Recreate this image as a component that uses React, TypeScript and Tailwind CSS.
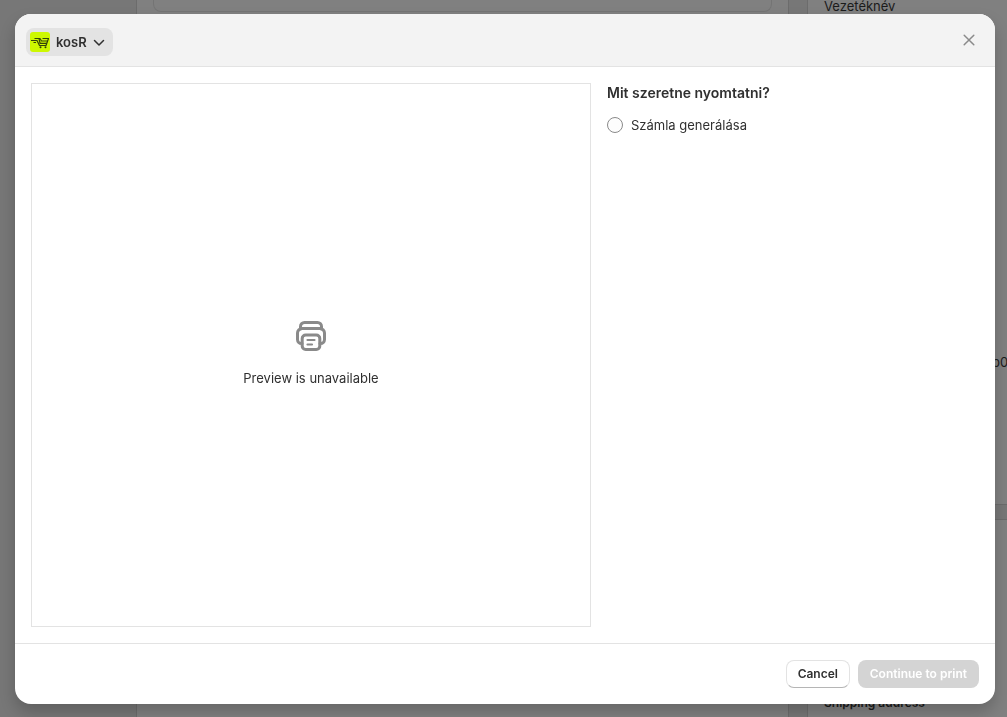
import React, { useState } from "react";

const AppLogo: React.FC = () => (
  <svg className="h-5 w-5" viewBox="0 0 20 20" fill="none" aria-hidden="true">
    <rect width="20" height="20" rx="3" fill="#cdf800" />
    <g stroke="#33420a" strokeWidth="1.2" strokeLinejoin="round">
      <path d="M1 8.500h6l2.500 5h6.500l2.500-7H12.500" />
      <path d="M4.500 6.500h5.500l1.500 2.500h6" />
      <path d="M3.500 10.500h2.500" />
      <path d="M9.500 11.300h7.500" />
      <path d="M9 6.500l1 4.500" />
    </g>
    <circle cx="10.500" cy="15.200" r="1" fill="#33420a" />
    <circle cx="15.500" cy="15.200" r="1" fill="#33420a" />
  </svg>
);

const PrinterIcon: React.FC = () => (
  <svg className="h-8 w-8" viewBox="0 0 32 32" fill="none" stroke="#8a8a8a" strokeWidth="3" strokeLinecap="round" strokeLinejoin="round" aria-hidden="true">
    <path d="M5.500 9V6.500a4 4 0 0 1 4-4h13a4 4 0 0 1 4 4V9" />
    <path d="M7 23.500h-.5a4 4 0 0 1-4-4V13a4.500 4.500 0 0 1 4.500-4.500h18a4.500 4.500 0 0 1 4.500 4.500v6.500a4 4 0 0 1-4 4H25" />
    <rect x="7.200" y="15" width="17.600" height="14.500" rx="3.500" />
    <path d="M12.500 20h7M12.500 24.500h4.500" strokeWidth="2.200" />
  </svg>
);

const Backdrop: React.FC = () => (
  <div className="flex h-screen overflow-hidden bg-[#777777] text-[13px] leading-5 text-[#1b1b1b]" aria-hidden="true">
    <div className="w-[136px] shrink-0" />
    <div className="min-w-0 flex-1 border-x border-[#6c6c6c] bg-[#808080] px-4">
      <div className="h-3 rounded-b-lg border border-t-0 border-[#747474]" />
    </div>
    <div className="ml-[18px] flex w-[200px] shrink-0 flex-col">
      <div className="flex h-[505px] flex-col border-b border-l border-[#6c6c6c] bg-[#808080] pl-4">
        <p className="-mt-1">Vezetéknév</p>
        <p className="mt-[336px] pl-[168px]">b0</p>
      </div>
      <div className="mt-[14px] flex flex-1 flex-col justify-end border-l border-t border-[#6c6c6c] bg-[#808080] pb-1 pl-4">
        <p className="text-xs leading-5 font-semibold">Shipping address</p>
      </div>
    </div>
  </div>
);

const App: React.FC = () => {
  const [source, setSource] = useState("");

  return (
    <div className="font-[Inter,'Noto_Sans',sans-serif]">
      <Backdrop />

      <div className="fixed inset-0 flex pt-[14px] pr-3 pb-[13px] pl-[15px]">
        <div
          role="dialog"
          aria-label="Print"
          className="flex flex-1 flex-col overflow-hidden rounded-2xl bg-white text-[13px] leading-5 text-[#303030] shadow-[0_8px_16px_rgba(0,0,0,0.2)]"
        >
          {/* Header */}
          <header className="flex h-[53px] shrink-0 items-center justify-between border-b border-[#e3e3e3] bg-[#f3f3f3] pr-4 pl-[11px]">
            <button className="mt-1 flex h-7 items-center gap-[6px] rounded-lg bg-[#e3e3e3] pr-2 pl-1 font-semibold">
              <AppLogo />
              <span>kosR</span>
              <svg className="h-3 w-3" viewBox="0 0 12 12" fill="none" stroke="#303030" strokeWidth="1.500" strokeLinecap="round" strokeLinejoin="round">
                <path d="M1.500 4.500L6 9l4.500-4.500" />
              </svg>
            </button>
            <button aria-label="Close" className="flex h-5 w-5 items-center justify-center">
              <svg className="h-3 w-3" viewBox="0 0 12 12" fill="none" stroke="#8a8a8a" strokeWidth="1.500" strokeLinecap="round">
                <path d="M1.200 1.200l9.600 9.600M10.800 1.200l-9.600 9.600" />
              </svg>
            </button>
          </header>

          {/* Body */}
          <main className="flex min-h-0 flex-1 gap-4 p-4">
            <section className="flex flex-1 flex-col items-center justify-center gap-4 border border-[#e3e3e3] pb-[3px]">
              <PrinterIcon />
              <p>Preview is unavailable</p>
            </section>
            <section className="w-[372px]">
              <h2 className="text-sm leading-5 font-semibold">Mit szeretne nyomtatni?</h2>
              <label className="mt-3 flex items-center gap-2">
                <input
                  type="radio"
                  name="source"
                  value="invoice"
                  checked={source === "invoice"}
                  onChange={(e) => setSource(e.target.value)}
                  className="h-4 w-4 appearance-none rounded-full border border-[#8a8a8a] bg-[#fdfdfd] checked:border-[5px] checked:border-[#303030]"
                />
                Számla generálása
              </label>
            </section>
          </main>

          {/* Footer */}
          <footer className="flex shrink-0 justify-end gap-2 border-t border-[#e3e3e3] p-4 text-xs font-semibold">
            <button className="h-7 w-16 rounded-lg border border-[#e3e3e3] border-b-[#b5b5b5] bg-white">Cancel</button>
            <button disabled={!source} className="h-7 rounded-lg bg-[#303030] px-3 text-white disabled:bg-[#d4d4d4]">
              Continue to print
            </button>
          </footer>
        </div>
      </div>
    </div>
  );
};

export default App;
